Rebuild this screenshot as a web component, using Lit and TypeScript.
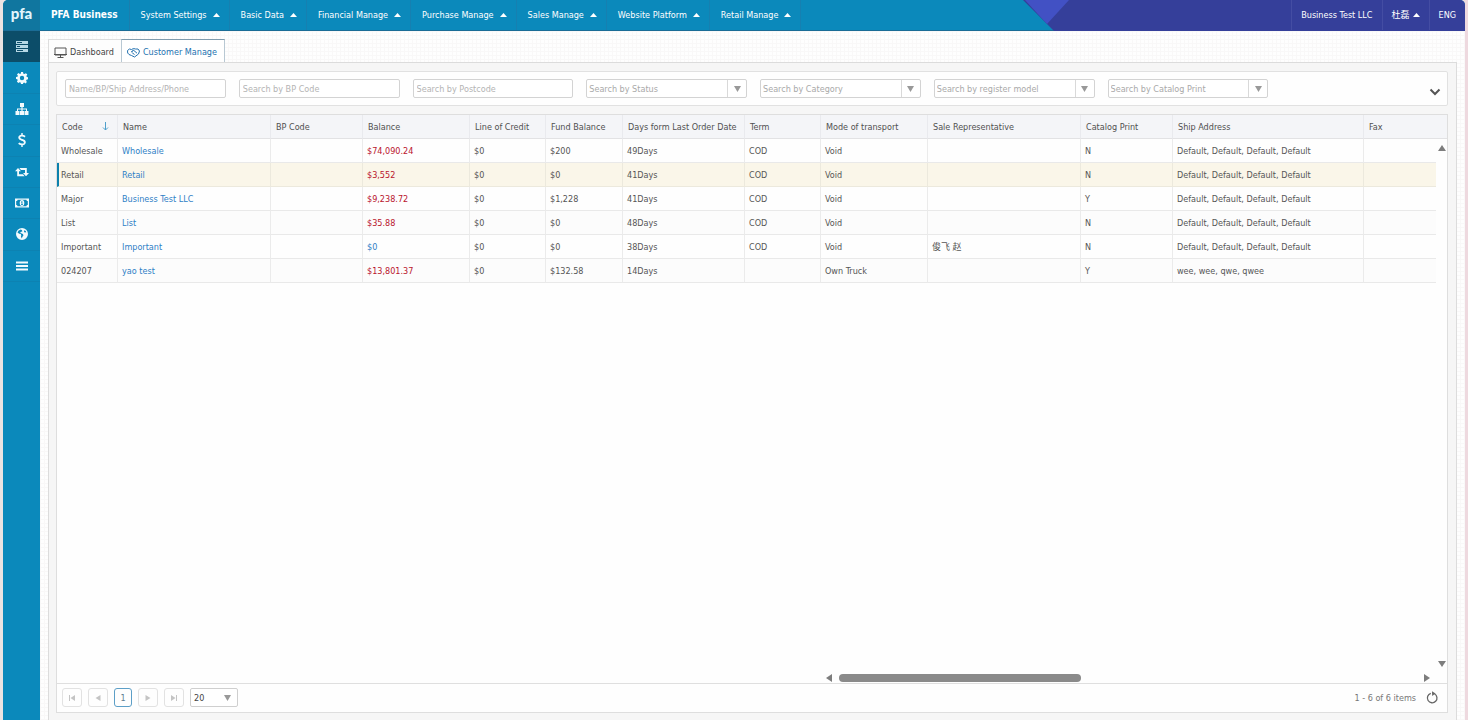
import { LitElement, html, css, svg, nothing } from "lit";
import { customElement } from "lit/decorators.js";
import { classMap } from "lit/directives/class-map.js";

const sideIcons = [
  { label: "Server", d: svg`<path fill-rule="evenodd" d="M1 2h12v3H1zM1 6h12v3H1zM1 10h12v3H1zM2 3v1h5V3zM2 7v1h3V7zM2 11v1h6v-1z"/>` },
  { label: "Settings", d: svg`<path fill-rule="evenodd" d="M6 1h2l.4 1.7 1 .4L10.9 2.200l1.400 1.400-.9 1.500.4 1L13 6.300v2l-1.500.4-.4 1 .8 1.300-1.400 1.400-1.300-.8-1 .4L8 13H6l-.4-1.400-1-.4-1.300.8L1.900 10.600l.8-1.300-.4-1L1 8V6l1.500-.3.4-1L2 3.500 3.400 2.100l1.500.9 1-.4zM7 4.800a2.200 2.200 0 1 0 0 4.400 2.200 2.200 0 0 0 0-4.400z"/>` },
  { label: "Organization", d: svg`<path d="M5 1h4v4H7.600v1.500H12V9h1.500v4h-4V9H11V7.500H7.600V9H9v4H5V9h1.400V7.500H3V9h1.500v4h-4V9H2V6.500h4.400V5H5z"/>` },
  { label: "Finance", d: svg`<path d="M6.300 0h1.400v1.700c1.200.1 2.200.6 2.900 1.300L9.500 4.400C8.800 3.800 8 3.400 7 3.400c-1.100 0-1.800.4-1.800 1.100 0 .8.800 1 2.200 1.500 1.800.6 3.400 1.300 3.400 3.300 0 1.600-1.200 2.700-3.100 3V14H6.300v-1.700c-1.300-.1-2.400-.6-3.200-1.500l1.200-1.300c.8.700 1.700 1.100 2.800 1.100s1.800-.4 1.800-1.200c0-.9-.8-1.200-2.400-1.700-1.900-.6-3.200-1.400-3.200-3.100 0-1.500 1.200-2.600 3-2.900z"/>` },
  { label: "Exchange", d: svg`<path d="M3 3 6 6.300H4v3h4l1.600 1.900H2.200v-5H0zM11 11.300 8 8h2V5H6L4.400 3h7.400v5H14z"/>` },
  { label: "Payments", d: svg`<path fill-rule="evenodd" d="M0 2.500h14v9H0zM2.600 3.700c0 .8-.6 1.300-1.400 1.300v4c.8 0 1.400.6 1.400 1.300h8.800c0-.8.6-1.300 1.400-1.300V5c-.8 0-1.400-.6-1.400-1.300zM7 4a2.300 3 0 1 1 0 6 2.300 3 0 0 1 0-6zm-.9 1.700v.7h.5v1.800h-.6v.7h2v-.7h-.6V5.200h-.6z"/>` },
  { label: "Website", d: svg`<path fill-rule="evenodd" d="M7 1a6 6 0 1 1 0 12A6 6 0 0 1 7 1zM5.600 2.500 3.400 3.700 2.500 5.500l1.700 1.300 1.600.3.500 1.300-.4 1.200.9 1.900.8-1.900.9-1.300-.6-1.200-1.700-.8L5 6l.9-1 1.500-.8-.6-1.200zM9.300 3.200 8.900 4.500l.8.9 1.600-.2-.6-1.200z"/>` },
  { label: "More", d: svg`<path d="M1 2.500h12v2H1zM1 6h12v2H1zM1 9.500h12v2H1z"/>` },
];

const menus = ["System Settings", "Basic Data", "Financial Manage", "Purchase Manage", "Sales Manage", "Website Platform", "Retail Manage"];

const filters = [
  { text: "Name/BP/Ship Address/Phone", select: false },
  { text: "Search by BP Code", select: false },
  { text: "Search by Postcode", select: false },
  { text: "Search by Status", select: true },
  { text: "Search by Category", select: true },
  { text: "Search by register model", select: true },
  { text: "Search by Catalog Print", select: true },
];

const columns = [
  { title: "Code", cls: "c61" },
  { title: "Name", cls: "c153" },
  { title: "BP Code", cls: "c92" },
  { title: "Balance", cls: "c107" },
  { title: "Line of Credit", cls: "c76" },
  { title: "Fund Balance", cls: "c77" },
  { title: "Days form Last Order Date", cls: "c122" },
  { title: "Term", cls: "c76" },
  { title: "Mode of transport", cls: "c107" },
  { title: "Sale Representative", cls: "c153" },
  { title: "Catalog Print", cls: "c92" },
  { title: "Ship Address", cls: "c191" },
  { title: "Fax", cls: "auto" },
];

const four = "Default, Default, Default, Default";
const rows = [
  ["Wholesale", "Wholesale", "", "$74,090.24", "$0", "$200", "49Days", "COD", "Void", "", "N", four, ""],
  ["Retail", "Retail", "", "$3,552", "$0", "$0", "41Days", "COD", "Void", "", "N", four, ""],
  ["Major", "Business Test LLC", "", "$9,238.72", "$0", "$1,228", "41Days", "COD", "Void", "", "Y", four, ""],
  ["List", "List", "", "$35.88", "$0", "$0", "48Days", "COD", "Void", "", "N", four, ""],
  ["Important", "Important", "", "$0", "$0", "$0", "38Days", "COD", "Void", "俊飞 赵", "N", four, ""],
  ["024207", "yao test", "", "$13,801.37", "$0", "$132.58", "14Days", "", "Own Truck", "", "Y", "wee, wee, qwe, qwee", ""],
];

const caret = html`<svg class="caret" viewBox="0 0 7 4" aria-hidden="true"><path d="M0 4 3.500 0 7 4z" /></svg>`;
const down = html`<svg class="down" viewBox="0 0 7 6" aria-hidden="true"><path d="M0 0h7L3.500 6z" /></svg>`;

@customElement("app-root")
export class AppRoot extends LitElement {
  static styles = css`
    :host {
      display: block;
      height: 100vh;
      box-sizing: border-box;
      padding: 0 3px;
      background: linear-gradient(90deg, #ebe3e2 50%, #eed9df 50%);
      font: 9px/12px "DejaVu Sans Condensed", "DejaVu Sans", "Noto Sans CJK SC", sans-serif;
      color: #555;
    }
    * { box-sizing: border-box; }
    button, input, select { font: inherit; color: inherit; margin: 0; padding: 0; border: 0; background: none; }
    a { color: inherit; text-decoration: none; }
    svg { display: block; flex: none; }
    .app { height: 100%; display: flex; flex-direction: column; border-radius: 5px 5px 0 0; overflow: hidden; background: #fdfdfd; }

    .top { position: relative; flex: none; display: flex; height: 31px; background: #0b89bb; border-bottom: 1px solid #1a6c96; color: #fff; }
    .deco { position: absolute; right: 0; top: 0; width: 442px; height: 31px; }
    .logo { width: 37px; display: grid; place-items: center; padding-bottom: 4px; background: #10769f; color: #e2f6fd; font: 900 15px/18px Lato, sans-serif; }
    .brand { padding: 0 11px; display: flex; align-items: center; font-size: 10px; font-weight: bold; border-right: 1px solid #1b7eae; white-space: nowrap; }
    .menu { display: flex; }
    .item { display: flex; align-items: center; gap: 6px; padding: 0 9px 0 11px; border-right: 1px solid #1680b1; white-space: nowrap; }
    .caret { width: 7px; height: 4px; fill: #fff; }
    .user { position: relative; margin-left: auto; display: flex; }
    .user .item { border-right: 0; border-left: 1px solid #444da3; padding: 0 9px; gap: 3px; }

    .body { flex: 1; min-height: 0; display: flex; }
    .side { flex: none; width: 37px; background: #0b89bb; }
    .icons { height: 251px; display: flex; flex-direction: column; }
    .icons button { flex: 1; display: grid; place-items: center; border-bottom: 1px solid #0d82b2; color: #f2fafd; }
    .icons .on { background: #0c4d69; color: #b5d8e5; border-color: #0c4d69; }
    .icons svg { width: 14px; height: 14px; fill: currentColor; }

    .main {
      flex: 1; min-width: 0; display: flex; flex-direction: column; padding: 8px 8px 0;
      background-color: #fefefe;
      background-image: linear-gradient(90deg, #f9f8f8 1px, transparent 1px), linear-gradient(#f9f8f8 1px, transparent 1px);
      background-size: 4px 4px;
    }
    .tabs { flex: none; display: flex; align-items: flex-end; height: 23px; }
    .tab { height: 23px; display: flex; align-items: center; gap: 3px; padding: 2px 7px 0 5px; border: 1px solid #dedede; border-bottom: 0; background: #fdfdfd; color: #444; white-space: nowrap; }
    .tab + .tab { margin-left: -1px; }
    .tab.on { color: #2472b0; background: #fff; border-color: #b8c8d3; border-top-color: #7f9bad; }
    .panel { flex: 1; min-height: 0; display: flex; flex-direction: column; gap: 8px; padding: 8px 8px 7px 7px; border: 1px solid #dcdcdc; border-bottom: 0; background: #f6f6f6; }

    .filters { flex: none; display: grid; grid-template-columns: repeat(8, 1fr); align-items: center; height: 35px; border: 1px solid #e1e1e1; border-radius: 2px; background: #fefefe; }
    .cell { padding: 0 5px 0 8px; }
    .field { display: grid; grid-template-columns: 1fr 19px; height: 19px; border: 1px solid #d3d3d3; border-radius: 2px; background: #fff; }
    .field input, .field select { grid-column: 1 / 3; grid-row: 1; width: 100%; min-width: 0; padding: 0 3px; border-radius: 2px; appearance: none; color: #a9a9a9; }
    .field select { padding: 0 2px; }
    .field input::placeholder { color: #b4b4b4; opacity: 1; }
    .arrow { grid-column: 2; grid-row: 1; display: grid; place-items: center; border-left: 1px solid #d9d9d9; pointer-events: none; }
    .down { width: 7px; height: 6px; fill: #999; }
    .more { display: flex; justify-content: flex-end; padding: 6px 6px 0 0; }

    .grid { flex: 1; min-height: 0; display: flex; flex-direction: column; border: 1px solid #dedede; background: #fefefe; }
    .scroll { position: relative; flex: 1; min-height: 0; overflow: hidden; }
    table { width: 100%; table-layout: fixed; border-collapse: separate; border-spacing: 0; }
    th { height: 24px; padding: 0 5px; text-align: left; font-weight: normal; background: #f4f5f8; border-bottom: 1px solid #e2e2e4; border-right: 1px solid #e9eaee; white-space: nowrap; color: #505050; }
    th:nth-last-child(-n + 2) { border-right: 0; }
    td { height: 24px; padding: 0 4px; border-right: 1px solid #ebebeb; border-bottom: 1px solid #e9e9e9; white-space: nowrap; }
    td:nth-last-child(2) { border-right: 0; }
    td:last-child { border: 0; }
    tr:nth-child(even) td:not(:last-child) { background: #fcfcfc; }
    tr.hot td:not(:last-child) { background: #faf6e9; border-color: #ece9dd; }
    tr.hot td:first-child { padding-left: 2px; border-left: 2px solid #0b80ad; }
    .head { display: flex; justify-content: space-between; align-items: center; padding-right: 3px; }
    .c61 { width: 61px; }
    .c76 { width: 76px; }
    .c77 { width: 77px; }
    .c92 { width: 92px; }
    .c107 { width: 107px; }
    .c122 { width: 122px; }
    .c153 { width: 153px; }
    .c191 { width: 191px; }
    .c11 { width: 11px; }
    .link { color: #2f80c6; }
    .red { color: #b9142c; }
    .vbar { position: absolute; right: 1px; top: 30px; bottom: 16px; display: flex; flex-direction: column; justify-content: space-between; }
    .hbar { position: absolute; right: 17px; bottom: 0; width: 604px; height: 11px; display: flex; align-items: center; gap: 7px; }
    .thumb { width: 40%; height: 8px; border-radius: 4px; background: #8a8a8a; }
    .scroll .end { margin-left: auto; }
    .tri { width: 8px; height: 6px; fill: #7d7d7d; }
    .tri.side-tri { width: 6px; height: 8px; }

    .pager { flex: none; height: 29px; display: flex; align-items: center; gap: 6px; padding: 0 9px 1px 5px; border-top: 1px solid #dfdfdf; }
    .page { width: 20px; height: 19px; display: grid; place-items: center; border: 1px solid #e2e2e2; border-radius: 3px; }
    .page svg { width: 8px; height: 8px; fill: #c4c4c4; }
    .page.on { width: 18px; border-color: #5d9fc7; color: #5f7f92; }
    .size { width: 48px; border-radius: 2px; color: #444; border-color: #cfcfcf; }
    .size select { padding: 0 3px; color: #444; }
    .size .arrow { border: 0; }
    .total { margin-left: auto; color: #777; }
    .refresh { margin-left: 4px; }
  `;

  render() {
    return html`
      <div class="app">
        <header class="top">
          <svg class="deco" viewBox="0 0 442 31" aria-hidden="true">
            <path fill="#353f9a" d="M0 0h442v31H31z" />
            <path fill="#4251c4" d="M2 0h44L24 24z" />
          </svg>
          <div class="logo">pfa</div>
          <div class="brand">PFA Business</div>
          <nav class="menu">${menus.map((m) => html`<button class="item">${m}${caret}</button>`)}</nav>
          <div class="user">
            <button class="item">Business Test LLC</button>
            <button class="item">杜磊${caret}</button>
            <button class="item">ENG</button>
          </div>
        </header>
        <div class="body">
          <aside class="side">
            <nav class="icons">
              ${sideIcons.map((s, i) => html`
                <button class=${classMap({ on: i === 0 })} aria-label=${s.label}>
                  <svg viewBox="0 0 14 14" aria-hidden="true">${s.d}</svg>
                </button>`)}
            </nav>
          </aside>
          <main class="main">
            <div class="tabs" role="tablist">
              <button class="tab" role="tab" aria-selected="false">
                <svg width="13" height="11" viewBox="0 0 13 11" fill="none" stroke="#555"><path d="M1 1h11v7H1z" /><path d="M0 7.500h13M6.500 8v2M3.500 10.500h6" /></svg>
                Dashboard
              </button>
              <button class="tab on" role="tab" aria-selected="true">
                <svg width="13" height="11" viewBox="0 0 13 11" fill="none" stroke="#2472b0"><path d="M.5 3.500 2.500 2l2 .5L6.500 1.500l2 .5 2.500 0 1.500 2-1 3-4 3-3-1.500L2 7.500.7 6zM4 5.200l2.500-2 3.500 3M5.200 5.800l2.300 1.700M6.500 3.200 5 4.700" /></svg>
                Customer Manage
              </button>
            </div>
            <section class="panel">
              <form class="filters">
                ${filters.map((f) => html`
                  <div class="cell">
                    <div class="field">
                      ${f.select
                        ? html`<select aria-label=${f.text}><option>${f.text}</option></select><span class="arrow">${down}</span>`
                        : html`<input type="text" aria-label=${f.text} placeholder=${f.text} />`}
                    </div>
                  </div>`)}
                <div class="more">
                  <button type="button" aria-label="More filters">
                    <svg width="12" height="8" viewBox="0 0 12 8" fill="none" stroke="#555" stroke-width="2"><path d="m1.500 1.500 4.500 4.500 4.500-4.500" /></svg>
                  </button>
                </div>
              </form>
              <div class="grid">
                <div class="scroll">
                  <table>
                    <thead>
                      <tr>
                        ${columns.map((c, i) => html`<th class=${c.cls} scope="col">${i === 0
                          ? html`<span class="head">${c.title}<svg width="7" height="9" viewBox="0 0 7 9" fill="none" stroke="#4f9fcb"><path d="M3.500 0v8M1 5.500 3.500 8 6 5.500" /></svg></span>`
                          : c.title}</th>`)}
                        <th class="c11"></th>
                      </tr>
                    </thead>
                    <tbody>
                      ${rows.map((r, n) => html`<tr class=${n === 1 ? "hot" : nothing}>
                        ${r.map((v, i) => html`<td>${i === 1
                          ? html`<a class="link" href="#">${v}</a>`
                          : i === 3
                            ? html`<span class=${v === "$0" ? "link" : "red"}>${v}</span>`
                            : v}</td>`)}
                        <td></td>
                      </tr>`)}
                    </tbody>
                  </table>
                  <div class="vbar" aria-hidden="true">
                    <svg class="tri" viewBox="0 0 8 6"><path d="M0 6 4 0l4 6z" /></svg>
                    <svg class="tri" viewBox="0 0 8 6"><path d="M0 0h8L4 6z" /></svg>
                  </div>
                  <div class="hbar" aria-hidden="true">
                    <svg class="tri side-tri" viewBox="0 0 6 8"><path d="M6 0v8L0 4z" /></svg>
                    <div class="thumb"></div>
                    <svg class="tri side-tri end" viewBox="0 0 6 8"><path d="M0 0v8l6-4z" /></svg>
                  </div>
                </div>
                <footer class="pager">
                  <button class="page" aria-label="First page"><svg viewBox="0 0 8 8"><path d="M1 1h1v6H1zM7 1v6L2.500 4z" /></svg></button>
                  <button class="page" aria-label="Previous page"><svg viewBox="0 0 8 8"><path d="M6.500 1v6L1.500 4z" /></svg></button>
                  <button class="page on">1</button>
                  <button class="page" aria-label="Next page"><svg viewBox="0 0 8 8"><path d="M1.500 1v6l5-3z" /></svg></button>
                  <button class="page" aria-label="Last page"><svg viewBox="0 0 8 8"><path d="M6 1h1v6H6zM1 1v6l4.500-3z" /></svg></button>
                  <div class="field size"><select aria-label="Items per page"><option>20</option></select><span class="arrow">${down}</span></div>
                  <span class="total">1 - 6 of 6 items</span>
                  <button class="refresh" aria-label="Refresh">
                    <svg width="12" height="13" viewBox="0 0 12 13" fill="none" stroke="#666" stroke-width="1.300"><path d="M8.500 2.800A4.800 4.800 0 1 1 4.800 2.400" /><path d="M6 .2 9.500 2.500 6.200 4.900z" fill="#666" stroke="none" /></svg>
                  </button>
                </footer>
              </div>
            </section>
          </main>
        </div>
      </div>
    `;
  }
}
